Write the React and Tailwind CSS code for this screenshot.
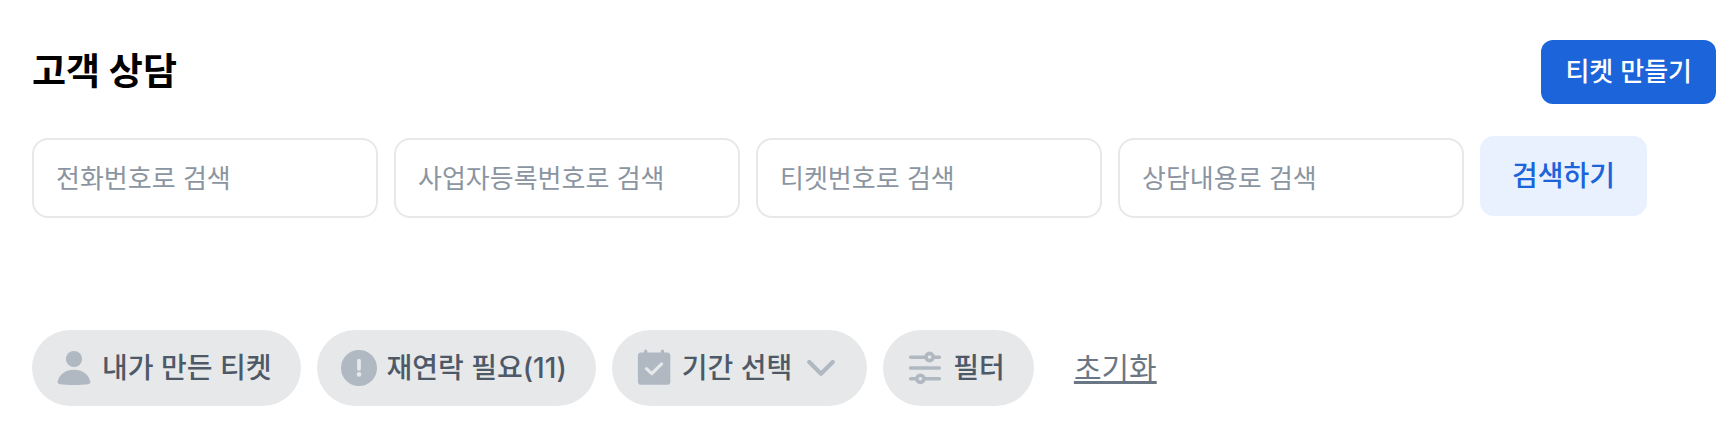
const fields = [
  { id: 'phone', label: '전화번호로 검색' },
  { id: 'business', label: '사업자등록번호로 검색' },
  { id: 'ticket', label: '티켓번호로 검색' },
  { id: 'content', label: '상담내용로 검색' },
];

function Icon({ children }) {
  return (
    <svg viewBox="0 0 36 36" fill="none" aria-hidden="true" className="size-9 shrink-0 overflow-visible text-[#b0b8c1]">
      {children}
    </svg>
  );
}

function UserIcon() {
  return (
    <Icon>
      <circle cx="18" cy="9" r="8.1" fill="currentColor" />
      <path
        d="M18 19.8C9.6 19.8 3.4 24.6 1.8 31c-.5 1.9.3 2.9 2.3 3.2 3.7.5 8.3.7 13.9.7s10.2-.2 13.9-.7c2-.3 2.8-1.3 2.3-3.2C32.6 24.6 26.4 19.8 18 19.8z"
        fill="currentColor"
      />
    </Icon>
  );
}

function AlertIcon() {
  return (
    <Icon>
      <circle cx="18" cy="18" r="18" fill="currentColor" />
      <path d="M18 10.6V18.8" stroke="#e6e8ea" strokeWidth="3.8" strokeLinecap="round" />
      <circle cx="18" cy="24.4" r="2.3" fill="#e6e8ea" />
    </Icon>
  );
}

function CalendarIcon() {
  return (
    <Icon>
      <rect x="1.9" y="2.4" width="32.4" height="32.4" rx="3.4" fill="currentColor" />
      <path d="M9.7 1V5M26.4 1V5" stroke="currentColor" strokeWidth="3.2" strokeLinecap="round" />
      <path d="M10.4 18.7L15.8 23.7L25.6 13.9" stroke="#e6e8ea" strokeWidth="3.2" strokeLinecap="round" strokeLinejoin="round" />
    </Icon>
  );
}

function ChevronIcon() {
  return (
    <Icon>
      <path d="M7.2 12L19 23.8L30.8 12" stroke="currentColor" strokeWidth="4.2" strokeLinecap="round" strokeLinejoin="round" />
    </Icon>
  );
}

function SlidersIcon() {
  return (
    <Icon>
      <path d="M3.6 7.2H32.4M3.6 18H32.4M3.6 28.8H32.4" stroke="currentColor" strokeWidth="3.4" strokeLinecap="round" />
      <circle cx="22.6" cy="7" r="3.6" fill="#e6e8ea" stroke="currentColor" strokeWidth="3.6" />
      <circle cx="13.4" cy="28.8" r="3.6" fill="#e6e8ea" stroke="currentColor" strokeWidth="3.6" />
    </Icon>
  );
}

function Pill({ icon, children, trailing }) {
  return (
    <button
      type="button"
      className="flex h-[76px] items-center gap-2.5 rounded-full bg-[#e6e8ea] pr-[29px] pl-6 text-[28px] leading-10 font-medium whitespace-nowrap text-[#4e5968]"
    >
      {icon}
      <span>{children}</span>
      {trailing}
    </button>
  );
}

export default function App() {
  return (
    <main className="bg-white pt-10 pr-5 pb-[30px] pl-8 font-[Inter,'Noto_Sans_CJK_KR',sans-serif]">
      <header className="flex items-center justify-between">
        <h1 className="text-[37px] leading-[64px] font-bold text-black">고객 상담</h1>
        <button type="button" className="h-16 rounded-xl bg-[#1b64da] px-6 text-[26px] leading-10 font-medium text-white">
          티켓 만들기
        </button>
      </header>

      <form className="mt-8 flex items-start gap-4" onSubmit={(e) => e.preventDefault()}>
        {fields.map((f) => (
          <div key={f.id} className="max-w-[346px] min-w-0 flex-1 pt-0.5">
            <input
              id={f.id}
              type="text"
              aria-label={f.label}
              placeholder={f.label}
              className="block h-20 w-full rounded-2xl border-2 border-[#e7e8ea] bg-white px-[22px] text-[26px] leading-10 text-[#333d4b] outline-none placeholder:text-[#8b95a1]"
            />
          </div>
        ))}
        <button type="submit" className="h-20 shrink-0 rounded-[14px] bg-[#e9f1ff] px-8 text-[28px] leading-10 font-medium text-[#1b64da]">
          검색하기
        </button>
      </form>

      <div className="mt-28 flex flex-wrap items-center gap-4">
        <Pill icon={<UserIcon />}>내가 만든 티켓</Pill>
        <Pill icon={<AlertIcon />}>재연락 필요(11)</Pill>
        <Pill icon={<CalendarIcon />} trailing={<ChevronIcon />}>
          기간 선택
        </Pill>
        <Pill icon={<SlidersIcon />}>필터</Pill>
        <button type="button" className="ml-6 text-[30px] leading-10 text-[#6b7684] underline decoration-[3px] underline-offset-2">
          초기화
        </button>
      </div>
    </main>
  );
}
